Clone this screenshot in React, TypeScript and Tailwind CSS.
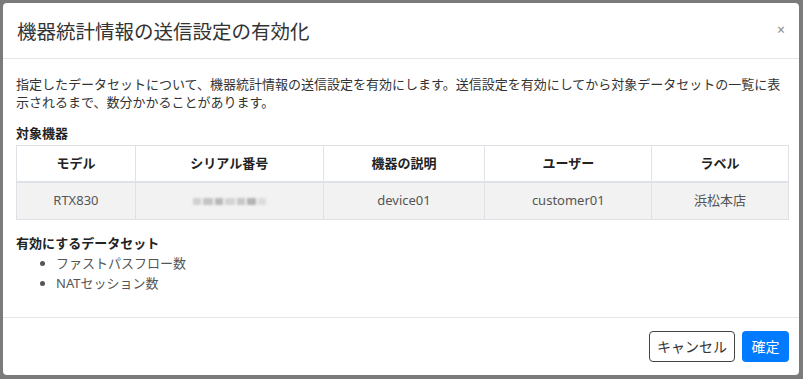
const font = { fontFamily: '"Noto Sans", "Noto Sans CJK JP", sans-serif' };

const cols = [
  { label: 'モデル', value: 'RTX830', w: 'w-[118px]' },
  { label: 'シリアル番号', value: '', w: 'w-[188px]' },
  { label: '機器の説明', value: 'device01', w: 'w-[162px]' },
  { label: 'ユーザー', value: 'customer01', w: 'w-[167px]' },
  { label: 'ラベル', value: '浜松本店', w: 'w-[137px]' },
];

function BlurredSerial() {
  return (
    <div className="flex items-center justify-center gap-[2px] blur-[1px]">
      <span className="w-[8px] h-[7px] bg-[#d0d0d0]" />
      <span className="w-[10px] h-[7px] bg-[#c4c4c4]" />
      <span className="w-[8px] h-[7px] bg-[#b8b8b8]" />
      <span className="w-[10px] h-[7px] bg-[#d4d4d4]" />
      <span className="w-[8px] h-[7px] bg-[#c8c8c8]" />
      <span className="w-[9px] h-[7px] bg-[#b4b4b4]" />
      <span className="w-[8px] h-[7px] bg-[#dcdcdc]" />
    </div>
  );
}

export default function App() {
  return (
    <div className="w-[803px] h-[379px] bg-[#7b7b7b] overflow-hidden pt-[3px] pl-[3px]" style={font}>
      <div className="w-[796px] h-[372px] bg-white rounded-[4px] flex flex-col text-[#333]">
        {/* header */}
        <div className="h-[56px] border-b border-[#e5e5e5] flex items-start justify-between pl-[14px] pr-[14px] pt-[17px]">
          <h5 className="text-[19.5px] leading-[24px] text-[#333]">機器統計情報の送信設定の有効化</h5>
          <button className="text-[14px] leading-[24px] text-[#888] mt-[-2px]">×</button>
        </div>

        {/* body */}
        <div className="flex-1 pl-[13px] pr-[10px] pt-[16px] text-[13px]">
          <p className="leading-[18px] text-[#333]">
            指定したデータセットについて、機器統計情報の送信設定を有効にします。送信設定を有効にしてから対象データセットの一覧に表示されるまで、数分かかることがあります。
          </p>
          <div className="mt-[12px] font-bold leading-[20px] text-[#222]">対象機器</div>
          <div className="mt-[2px] border border-[#dee2e6] flex flex-col">
            <div className="flex h-[37px] border-b-2 border-[#dee2e6]">
              {cols.map((c, i) => (
                <div
                  key={c.label}
                  className={`${c.w} ${i > 0 ? 'border-l border-[#dee2e6]' : ''} flex items-center justify-center font-bold text-[#222]`}
                >
                  {c.label}
                </div>
              ))}
            </div>
            <div className="flex h-[36px] bg-[#f2f2f2]">
              {cols.map((c, i) => (
                <div
                  key={c.label}
                  className={`${c.w} ${i > 0 ? 'border-l border-[#dee2e6]' : ''} flex items-center justify-center text-[#555]`}
                >
                  {c.value ? c.value : <BlurredSerial />}
                </div>
              ))}
            </div>
          </div>
          <div className="mt-[13px] font-bold leading-[20px] text-[#222]">有効にするデータセット</div>
          <ul className="list-disc pl-[40px] leading-[20px] text-[#555]">
            <li>ファストパスフロー数</li>
            <li>NATセッション数</li>
          </ul>
        </div>

        {/* footer */}
        <div className="h-[58px] border-t border-[#e5e5e5] flex items-center justify-end gap-[7px] pr-[10px] pb-[1px]">
          <button className="h-[31px] w-[86px] border border-[#444] rounded-[4px] text-[14px] text-[#333] bg-white">
            キャンセル
          </button>
          <button className="h-[31px] w-[47px] rounded-[4px] text-[14px] text-white bg-[#007bff]">確定</button>
        </div>
      </div>
    </div>
  );
}
